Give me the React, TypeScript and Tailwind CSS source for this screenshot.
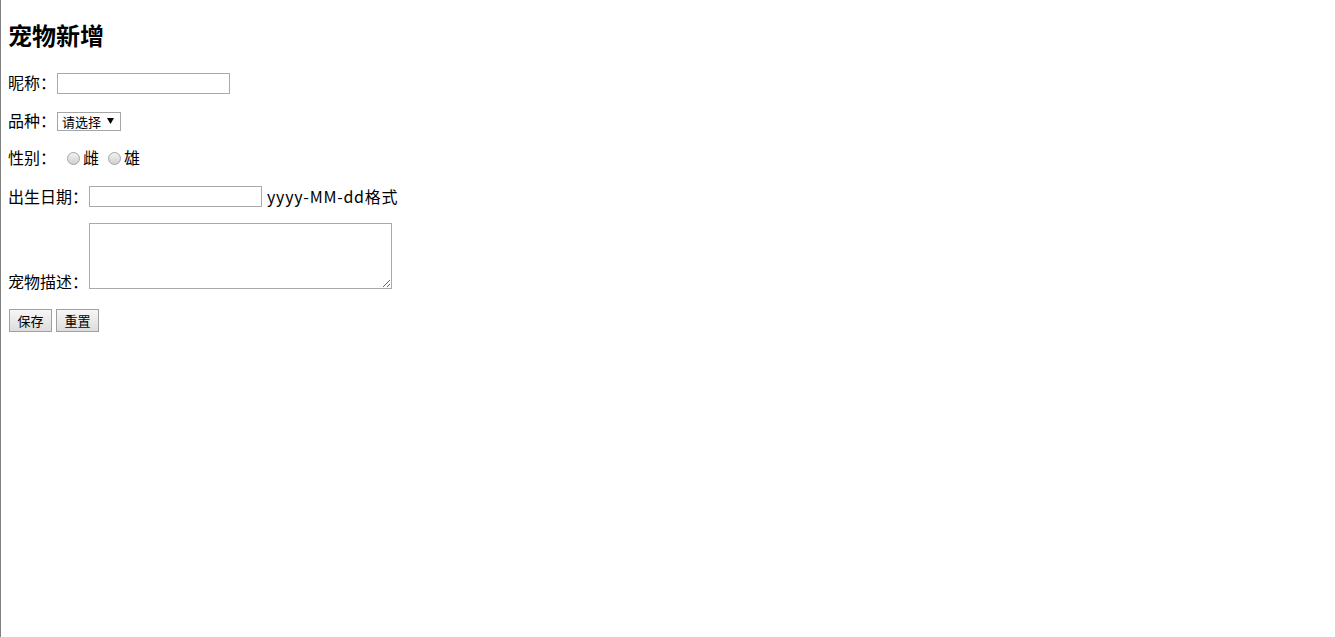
import React from 'react';

export default function App() {
  const font = { fontFamily: '"Microsoft YaHei", "Noto Sans CJK SC", "Noto Sans", sans-serif' };
  return (
    <div className="min-h-screen border-l border-[#808080] bg-white pl-[7px] text-black" style={font}>
      {/* Title */}
      <h2 className="pt-[19px] h-[51px] text-[24px] leading-[32px] font-bold">宠物新增</h2>

      <form className="flex flex-col pt-[21px]" onSubmit={(e) => e.preventDefault()}>
        {/* Nickname */}
        <div className="flex items-center h-[22px] text-[16px]">
          <label className="w-[49px] shrink-0 leading-[22px] pb-[2px]">昵称：</label>
          <input type="text" className="block w-[173px] h-[21px] border border-[#a9a9a9] bg-white px-[2px] text-[13px] outline-none" />
        </div>

        {/* Breed */}
        <div className="flex items-center h-[22px] mt-[16px] text-[16px]">
          <label className="w-[49px] shrink-0 leading-[22px] pb-[2px]">品种：</label>
          <div className="relative w-[64px] h-[19px]">
            <select className="block appearance-none w-full h-[19px] border border-[#a6a6a6] bg-white pl-[4px] pr-[14px] text-[13px] leading-[17px] outline-none rounded-none">
              <option>请选择</option>
            </select>
            <svg className="absolute right-[7px] top-[6px] pointer-events-none" width="7" height="6" viewBox="0 0 7 6">
              <path d="M0 0 H7 L3.5 6 Z" fill="#000" />
            </svg>
          </div>
        </div>

        {/* Gender */}
        <div className="flex items-center h-[22px] mt-[15px] text-[16px]">
          <label className="w-[59px] shrink-0 leading-[22px] pb-[2px]">性别：</label>
          <input type="radio" name="sex" className="appearance-none block w-[13px] h-[13px] rounded-full border border-[#a3a3a3] bg-gradient-to-b from-[#f2f2f2] to-[#d0d0d0]" />
          <span className="ml-[3px] leading-[22px] pb-[2px]">雌</span>
          <input type="radio" name="sex" className="appearance-none block ml-[9px] w-[13px] h-[13px] rounded-full border border-[#a3a3a3] bg-gradient-to-b from-[#f2f2f2] to-[#d0d0d0]" />
          <span className="ml-[3px] leading-[22px] pb-[2px]">雄</span>
        </div>

        {/* Birth date */}
        <div className="flex items-start h-[22px] mt-[17px] text-[16px]">
          <label className="w-[81px] shrink-0 leading-[21px] pb-[1px]">出生日期：</label>
          <input type="text" className="block w-[173px] h-[21px] border border-[#a9a9a9] bg-white px-[2px] text-[13px] outline-none" />
          <span className="ml-[5px] leading-[21px] pb-[1px] tracking-[0.75px]">yyyy-MM-dd格式</span>
        </div>

        {/* Description */}
        <div className="flex items-end mt-[15px] text-[16px]">
          <label className="w-[81px] shrink-0 leading-[20px] -mb-[2px]">宠物描述：</label>
          <textarea className="block w-[303px] h-[66px] border border-[#a9a9a9] bg-white text-[13px] outline-none" />
        </div>

        {/* Buttons */}
        <div className="flex items-center gap-[4px] mt-[20px] pl-[1px]">
          <button type="submit" className="w-[43px] h-[23px] border border-[#a0a0a0] bg-gradient-to-b from-[#f6f6f6] to-[#dddddd] text-[13px] leading-[21px]">保存</button>
          <button type="reset" className="w-[43px] h-[23px] border border-[#a0a0a0] bg-gradient-to-b from-[#f6f6f6] to-[#dddddd] text-[13px] leading-[21px]">重置</button>
        </div>
      </form>
    </div>
  );
}
